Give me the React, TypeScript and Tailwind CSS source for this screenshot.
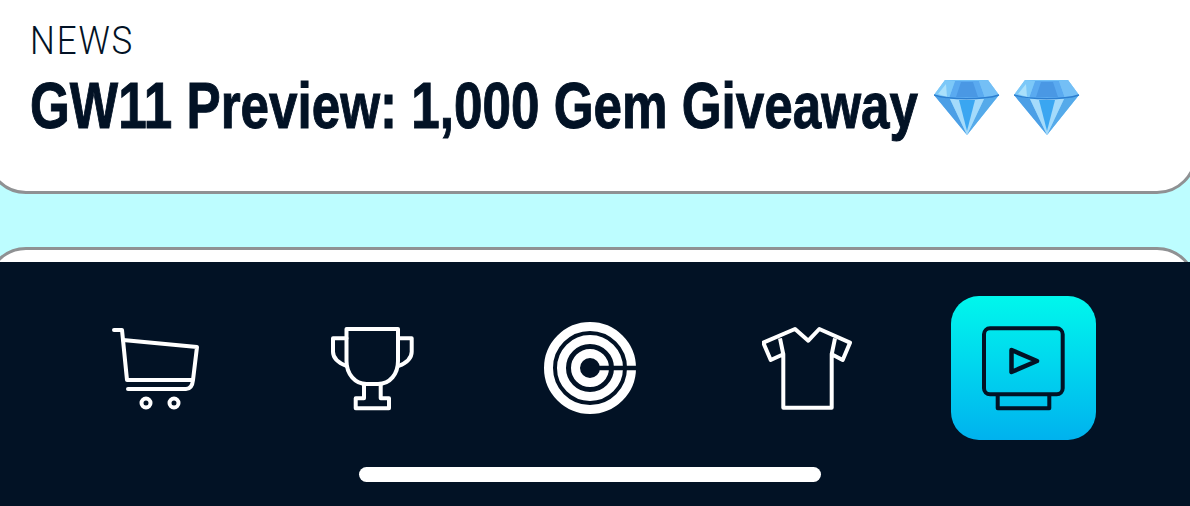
const Cart = () => (
  <svg width="90" height="87" viewBox="0 0 90 87" fill="none" stroke="white" strokeWidth="4" strokeLinecap="round" strokeLinejoin="round">
    <path d="M3 5H11L16 55H81" />
    <path d="M12 15L86 22L82 55C81.5 60 80 64 75 64H17" />
    <circle cx="35" cy="78" r="4.5" />
    <circle cx="63" cy="78" r="4.5" />
  </svg>
);

const Trophy = () => (
  <svg width="87" height="87" viewBox="0 0 87 87" fill="none" stroke="white" strokeWidth="4" strokeLinecap="round" strokeLinejoin="round">
    <path d="M17.5 4H69V36C69 49 61 59 49 59H37.5C26 59 17.5 49 17.5 36Z" />
    <path d="M17.5 13.3H4V26.7C4 33 10 38 17.5 41" />
    <path d="M69 13.3H82.7V26.7C82.7 33 77 38 69.5 41" />
    <path d="M35 59V73.3H26.7V83.3H60V73.3H51.7V59" />
  </svg>
);

const Target = () => (
  <svg width="92" height="92" viewBox="0 0 92 92" fill="none" stroke="white" strokeWidth="9">
    <circle cx="46" cy="46" r="41.5" />
    <circle cx="46" cy="46" r="28.5" />
    <circle cx="46" cy="46" r="14.5" />
    <path d="M46 46H92" stroke="#021225" strokeWidth="4.5" />
  </svg>
);

const Shirt = () => (
  <svg width="90" height="87" viewBox="0 0 90 87" fill="none" stroke="white" strokeWidth="4" strokeLinejoin="round">
    <path d="M33 4L46.3 15.7L57.3 4L88 17.7L80.7 35L69.7 29.3V82.7H21.3V29.3L8.7 35L1.3 17.7Z" />
    <path d="M18 13.3L21.3 29.3M73 13.3L69.7 29.3" />
  </svg>
);

const TvPlay = () => (
  <svg width="145" height="144" viewBox="0 0 145 144" fill="none" stroke="#021225" strokeWidth="4" strokeLinejoin="round">
    <rect x="33" y="32.3" width="78.7" height="66" rx="6" />
    <path d="M46.7 98.3V112.3H98.3V98.3" />
    <path d="M60.5 54L86 65L60.5 76Z" strokeWidth="4.5" />
  </svg>
);

const Gem = () => (
  <svg width="66" height="56" viewBox="0 0 66 56">
    <path d="M11 1H54L65 16L33 56L0 16Z" fill="#72c2f7" />
    <path d="M21 2H45L51 19H15Z" fill="#5aaaf0" />
    <path d="M27 3H39L44 18H22Z" fill="#4a98e4" />
    <path d="M11 1L21 2L15 19L0 16Z" fill="#7cc8f8" />
    <path d="M54 1L45 2L51 19L65 16Z" fill="#74bff6" />
    <path d="M4 15L12 5L13 18Z" fill="#a9e0fb" />
    <path d="M0 16L16 20L33 56Z" fill="#4c9fe6" />
    <path d="M65 16L50 20L33 56Z" fill="#55aaea" />
    <path d="M16 20H50L33 56Z" fill="#a5dbfb" />
    <path d="M25 21H41L33 52Z" fill="#3aa6f1" />
    <path d="M0 16C16 21 49 21 65 16" fill="none" stroke="#2d7fd0" strokeWidth="1.5" />
  </svg>
);

export default function App() {
  const navIcons = [<Cart key="cart" />, <Trophy key="trophy" />, <Target key="target" />, <Shirt key="shirt" />];

  return (
    <div className="w-[1190px] h-[506px] overflow-hidden bg-[#bdfdff] flex flex-col font-['Liberation_Sans',sans-serif] text-[#021225]">
      <div className="h-[197px] shrink-0 ml-[-14px] mr-[-7px] mt-[-3px] bg-white border-[3px] border-[#8f9193] rounded-b-[40px] pl-[41px] pt-[19px]">
        <div className="text-[38px] leading-[44px] font-['Roboto',sans-serif] font-light origin-left scale-x-[0.92] tracking-[2px]">NEWS</div>
        <div className="flex items-center mt-[8px] h-[70px]">
          <div className="w-[887px] shrink-0">
            <span className="inline-block origin-left scale-x-[0.8] text-[64px] leading-[70px] font-bold whitespace-nowrap [-webkit-text-stroke:1px_#021225]">GW11 Preview: 1,000 Gem Giveaway</span>
          </div>
          <div className="flex gap-[14px] ml-[17px] mt-[1px]">
            <Gem />
            <Gem />
          </div>
        </div>
      </div>

      <div className="mt-[53px] flex-1 ml-[-14px] mr-[-7px] mb-[-60px] bg-white border-[3px] border-[#8f9193] rounded-t-[40px] pt-[12px] flex flex-col">
        <div className="flex-1 bg-[#021225] pl-[58px] pt-[34px]">
          <div className="grid grid-cols-[217px_217px_217px_217px_217px] h-[144px] items-center justify-items-center">
            {navIcons.map((icon) => icon)}
            <div className="w-[145px] h-[144px] rounded-[28px] bg-gradient-to-b from-[#00f7ec] to-[#00b2ee]">
              <TvPlay />
            </div>
          </div>
          <div className="w-[462px] h-[15px] ml-[312px] mt-[27px] rounded-full bg-white" />
        </div>
      </div>
    </div>
  );
}
